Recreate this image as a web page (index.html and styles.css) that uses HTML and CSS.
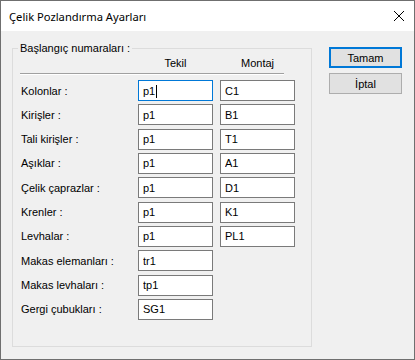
FILE: index.html
```html
<!DOCTYPE html>
<html lang="tr">
<head>
    <meta charset="UTF-8">
    <meta name="viewport" content="width=device-width, initial-scale=1.0">
    <title>Çelik Pozlandırma Ayarları</title>
    <link rel="stylesheet" href="styles.css">
</head>
<body>

    <div class="window">
        <div class="titlebar">
            <span class="title">Çelik Pozlandırma Ayarları</span>
            <svg class="close" width="10" height="10" viewBox="0 0 10 10">
                <path d="M0 0 L10 10 M10 0 L0 10" stroke="#000" stroke-width="1" fill="none"/>
            </svg>
        </div>

        <div class="client">
            <fieldset class="group">
                <legend>Başlangıç numaraları :</legend>

                <div class="grid head">
                    <span></span>
                    <span>Tekil</span>
                    <span>Montaj</span>
                </div>
                <div class="separator"></div>

                <div class="grid rows">
                    <label for="kolon">Kolonlar :</label>
                    <span class="focus-wrap">
                        <input type="text" id="kolon" class="field focused" value="p1">
                        <span class="caret"></span>
                    </span>
                    <input type="text" class="field" value="C1">

                    <label>Kirişler :</label>
                    <input type="text" class="field" value="p1">
                    <input type="text" class="field" value="B1">

                    <label>Tali kirişler :</label>
                    <input type="text" class="field" value="p1">
                    <input type="text" class="field" value="T1">

                    <label>Aşıklar :</label>
                    <input type="text" class="field" value="p1">
                    <input type="text" class="field" value="A1">

                    <label>Çelik çaprazlar :</label>
                    <input type="text" class="field" value="p1">
                    <input type="text" class="field" value="D1">

                    <label>Krenler :</label>
                    <input type="text" class="field" value="p1">
                    <input type="text" class="field" value="K1">

                    <label>Levhalar :</label>
                    <input type="text" class="field" value="p1">
                    <input type="text" class="field" value="PL1">

                    <label>Makas elemanları :</label>
                    <input type="text" class="field" value="tr1">
                    <span></span>

                    <label>Makas levhaları :</label>
                    <input type="text" class="field" value="tp1">
                    <span></span>

                    <label>Gergi çubukları :</label>
                    <input type="text" class="field" value="SG1">
                    <span></span>
                </div>
            </fieldset>

            <div class="buttons">
                <button type="button" class="btn primary">Tamam</button>
                <button type="button" class="btn">İptal</button>
            </div>
        </div>
    </div>

</body>
</html>
```

FILE: styles.css
```css
body {
    margin: 0;
    font-family: "Liberation Sans", Arial, sans-serif;
    font-size: 11px;
    color: #000;
    background-color: #f0f0f0;
}

.window {
    width: 415px;
    height: 360px;
    box-sizing: border-box;
    border: 1px solid #6f6f6f;
    display: flex;
    flex-direction: column;
    background-color: #f0f0f0;
}

.titlebar {
    height: 30px;
    flex-shrink: 0;
    background-color: #fff;
    display: flex;
    align-items: center;
    justify-content: space-between;
    padding: 0 10px 0 8px;
}

.title {
    font-family: "Noto Sans", sans-serif;
    font-size: 11.2px;
}

.close {
    display: block;
}

.client {
    flex: 1;
    display: flex;
    align-items: stretch;
    gap: 17px;
    padding: 11px 12px 12px 11px;
}

.group {
    width: 300px;
    box-sizing: border-box;
    margin: 0;
    padding: 0 7px;
    border: 1px solid #dcdcdc;
}

.group legend {
    padding: 0 2px;
    margin-left: -2px;
    line-height: 13px;
}

.grid {
    display: grid;
    grid-template-columns: 111px 75px 75px;
    column-gap: 7px;
}

.head {
    margin-top: 2px;
    line-height: 13px;
    text-align: center;
}

.separator {
    width: 264px;
    margin-top: 3px;
    border-top: 1px solid #a0a0a0;
    border-bottom: 1px solid #fff;
}

.rows {
    margin-top: 5px;
    grid-auto-rows: 21px;
    row-gap: 3.33px;
}

.rows label {
    align-self: center;
    padding-left: 1px;
}

.field {
    width: 75px;
    height: 21px;
    box-sizing: border-box;
    margin: 0;
    padding: 0 4px;
    border: 1px solid #7a7a7a;
    border-radius: 0;
    background-color: #fff;
    font-family: "Liberation Sans", Arial, sans-serif;
    font-size: 11px;
    color: #000;
    outline: none;
}

.field.focused {
    border-color: #0078d7;
}

.focus-wrap {
    position: relative;
    display: block;
}

.caret {
    position: absolute;
    left: 18px;
    top: 5px;
    width: 1px;
    height: 13px;
    background-color: #000;
}

.buttons {
    width: 73px;
    display: flex;
    flex-direction: column;
    gap: 5px;
    padding-top: 5px;
}

.btn {
    height: 21px;
    margin: 0;
    padding: 0;
    background-color: #e1e1e1;
    border: 1px solid #adadad;
    border-radius: 0;
    font-family: "Liberation Sans", Arial, sans-serif;
    font-size: 11px;
    color: #000;
}

.btn.primary {
    border: 2px solid #0078d7;
}
```
